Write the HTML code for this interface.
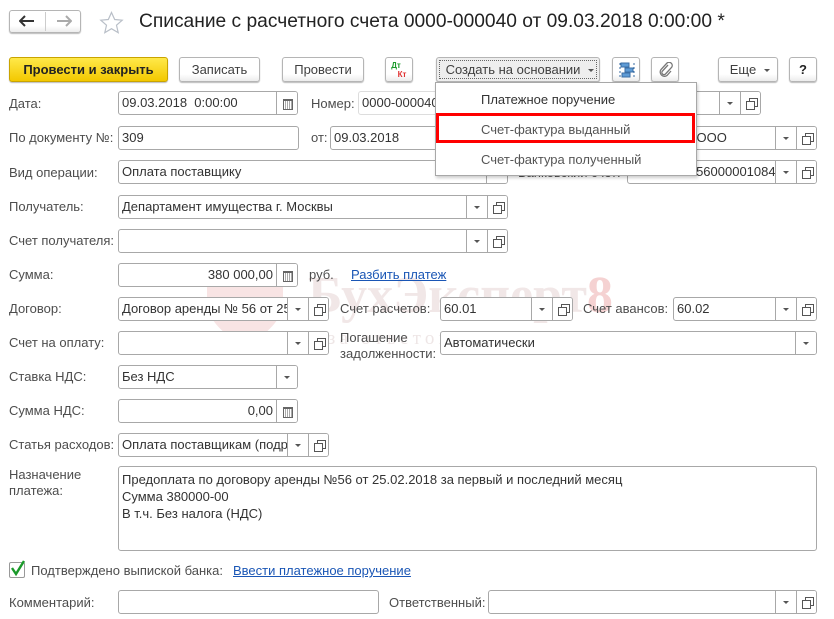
<!DOCTYPE html>
<html><head><meta charset="utf-8"><style>
*{box-sizing:border-box;margin:0;padding:0}
body{width:834px;height:619px;background:#fff;position:relative;overflow:hidden;font-family:"Liberation Sans",Arial,sans-serif;font-size:13px;color:#4d4d4d}
.a{position:absolute}
.lb{position:absolute;line-height:16px;white-space:nowrap}
.f{position:absolute;height:24px;border:1px solid #a8a8a8;border-radius:3px;background:#fff;color:#333;line-height:22px;padding-left:3px;white-space:nowrap;overflow:hidden}
.b{position:absolute;top:0;bottom:0;width:21px;border-left:1px solid #a8a8a8;background:#fff}
.dd::after{content:"";position:absolute;left:7px;top:10px;border-left:3px solid transparent;border-right:3px solid transparent;border-top:3px solid #555}
.op::before{content:"";position:absolute;left:8px;top:6px;width:7px;height:7px;border:1px solid #555}
.op::after{content:"";position:absolute;left:5px;top:9px;width:7px;height:7px;border:1px solid #555;background:#fff}
.cal::after{content:"";position:absolute;left:6px;top:7px;width:8px;height:8px;border:1px solid #666;border-top-width:2px;background:repeating-linear-gradient(90deg,#fff 0 1px,#aaa 1px 2px)}
.btn{position:absolute;height:25px;border:1px solid #b5b5b5;border-radius:3px;background:linear-gradient(#fff 70%,#ececec);box-shadow:0 1px 1px #bbb;text-align:center;line-height:23px;color:#404040;white-space:nowrap}
.mi{position:absolute;left:45px;line-height:16px;color:#333}
</style></head><body>
<div class="btn" style="left:9px;top:10px;width:72px;height:23px"></div>
<div class="a" style="left:45px;top:12px;width:1px;height:19px;background:#ccc"></div>
<svg class="a" style="left:19px;top:15px" width="16" height="12"><path d="M1 6h14M6 1L1 6l5 5" fill="none" stroke="#333" stroke-width="2"/></svg>
<svg class="a" style="left:56px;top:15px" width="16" height="12"><path d="M1 6h14M10 1l5 5-5 5" fill="none" stroke="#aaa" stroke-width="2"/></svg>
<svg class="a" style="left:99px;top:11px" width="25" height="24" viewBox="0 0 25 24"><path d="M12.5 1.5l3.2 7 7.5.7-5.7 5 1.7 7.4-6.7-3.9-6.7 3.9 1.7-7.4-5.7-5 7.5-.7z" fill="none" stroke="#b9bfc8" stroke-width="1.2"/></svg>
<div class="a" style="left:139px;top:10px;font-size:19.2px;color:#222;line-height:24px;white-space:nowrap">Списание с расчетного счета 0000-000040 от 09.03.2018 0:00:00 *</div>
<div class="btn" style="left:9px;top:57px;width:159px;background:linear-gradient(#ffe94a,#f3c800);border-color:#c9a400;color:#222;font-weight:bold">Провести и закрыть</div>
<div class="btn" style="left:179px;top:57px;width:81px">Записать</div>
<div class="btn" style="left:282px;top:57px;width:82px">Провести</div>
<div class="btn" style="left:385px;top:57px;width:28px;font-size:8px;line-height:9px;padding-top:3px;font-weight:bold"><span style="color:#1a9a2a;margin-right:6px">Дт</span><br><span style="color:#e03030;margin-left:6px">Кт</span></div>
<div class="btn" style="left:436px;top:57px;width:164px;background:#eee;padding-right:10px">Создать на основании<span style="position:absolute;right:5px;top:11px;border-left:3px solid transparent;border-right:3px solid transparent;border-top:3px solid #555"></span></div>
<div class="a" style="left:439px;top:60px;width:158px;height:19px;border:1px dotted #666"></div>
<div class="btn" style="left:612px;top:57px;width:28px"><svg class="a" style="left:6px;top:4px" width="16" height="16"><rect x="2" y="1" width="8" height="4" fill="#5d9bd5" stroke="#3a6ea5"/><rect x="6" y="6" width="8" height="4" fill="#5d9bd5" stroke="#3a6ea5"/><rect x="3" y="11" width="8" height="4" fill="#5d9bd5" stroke="#3a6ea5"/><path d="M1 1v14M15 1v14" stroke="#3a6ea5" stroke-dasharray="2 2"/></svg></div>
<div class="btn" style="left:651px;top:57px;width:28px"><svg class="a" style="left:6px;top:4px" width="16" height="16"><path d="M10 3L4.5 9a2 2 0 0 0 3 3l6-6.5a3.2 3.2 0 0 0-4.5-4.5L3 7.5a4.3 4.3 0 0 0 6 6L13 9" fill="none" stroke="#777" stroke-width="1.3"/></svg></div>
<div class="btn" style="left:718px;top:57px;width:60px;padding-right:10px">Еще<span style="position:absolute;right:7px;top:11px;border-left:3px solid transparent;border-right:3px solid transparent;border-top:3px solid #555"></span></div>
<div class="btn" style="left:789px;top:57px;width:28px;color:#222;font-weight:bold">?</div>

<svg class="a" style="left:205px;top:278px" width="80" height="70"><path d="M2 2h76v22c0 18-18 34-38 44C20 58 2 42 2 24z" fill="#f8e4e4"/><path d="M20 22q20 14 40 0M28 30q12 10 24 0" stroke="#fff" stroke-width="3" fill="none"/></svg>
<div class="a" style="left:308px;top:268px;font-family:'Liberation Serif',serif;font-weight:bold;font-size:52px;line-height:56px;color:#f1e7e7;white-space:nowrap">БухЭксперт<span style="color:#f5d2d2">8</span></div>
<div class="a" style="left:300px;top:328px;font-family:'Liberation Serif',serif;font-size:19px;letter-spacing:4.2px;color:#eee6e6;white-space:nowrap">База ответов по учёту в 1С</div>

<div class="lb" style="left:9px;top:96px">Дата:</div>
<div class="f" style="left:118px;top:91px;width:180px">09.03.2018&nbsp; 0:00:00<div class="b cal" style="right:0"></div></div>
<div class="lb" style="left:311px;top:96px">Номер:</div>
<div class="f" style="left:358px;top:91px;width:120px;border-color:#ddd">0000-000040</div>
<div class="f" style="left:680px;top:91px;width:81px"><div class="b dd" style="right:20px"></div><div class="b op" style="right:0;width:20px"></div></div>

<div class="lb" style="left:9px;top:130px">По документу №:</div>
<div class="f" style="left:118px;top:126px;width:181px">309</div>
<div class="lb" style="left:311px;top:130px">от:</div>
<div class="f" style="left:330px;top:126px;width:120px">09.03.2018</div>
<div class="f" style="left:680px;top:126px;width:137px">м ООО<div class="b dd" style="right:20px"></div><div class="b op" style="right:0;width:20px"></div></div>

<div class="lb" style="left:9px;top:165px">Вид операции:</div>
<div class="f" style="left:118px;top:160px;width:390px">Оплата поставщику<div class="b" style="right:0"></div></div>
<div class="lb" style="left:518px;top:165px">Банковский счет:</div>
<div class="f" style="left:627px;top:160px;width:190px">40702810556000001084<div class="b dd" style="right:20px"></div><div class="b op" style="right:0;width:20px"></div></div>

<div class="lb" style="left:9px;top:199px">Получатель:</div>
<div class="f" style="left:118px;top:195px;width:390px">Департамент имущества г. Москвы<div class="b dd" style="right:20px"></div><div class="b op" style="right:0;width:20px"></div></div>

<div class="lb" style="left:9px;top:233px">Счет получателя:</div>
<div class="f" style="left:118px;top:229px;width:390px"><div class="b dd" style="right:20px"></div><div class="b op" style="right:0;width:20px"></div></div>

<div class="lb" style="left:9px;top:267px">Сумма:</div>
<div class="f" style="left:118px;top:263px;width:180px;text-align:right;padding-right:24px">380 000,00<div class="b cal" style="right:0"></div></div>
<div class="lb" style="left:309px;top:267px">руб.</div>
<div class="lb" style="left:351px;top:267px;color:#1a56b5;text-decoration:underline">Разбить платеж</div>

<div class="lb" style="left:9px;top:301px">Договор:</div>
<div class="f" style="left:118px;top:297px;width:211px">Договор аренды № 56 от 25.02<div class="b dd" style="right:20px"></div><div class="b op" style="right:0;width:20px"></div></div>
<div class="lb" style="left:340px;top:301px">Счет расчетов:</div>
<div class="f" style="left:440px;top:297px;width:133px">60.01<div class="b dd" style="right:20px"></div><div class="b op" style="right:0;width:20px"></div></div>
<div class="lb" style="left:583px;top:301px">Счет авансов:</div>
<div class="f" style="left:673px;top:297px;width:144px">60.02<div class="b dd" style="right:20px"></div><div class="b op" style="right:0;width:20px"></div></div>

<div class="lb" style="left:9px;top:335px">Счет на оплату:</div>
<div class="f" style="left:118px;top:331px;width:211px"><div class="b dd" style="right:20px"></div><div class="b op" style="right:0;width:20px"></div></div>
<div class="lb" style="left:340px;top:330px">Погашение</div>
<div class="lb" style="left:340px;top:346px">задолженности:</div>
<div class="f" style="left:440px;top:331px;width:377px">Автоматически<div class="b dd" style="right:0"></div></div>

<div class="lb" style="left:9px;top:369px">Ставка НДС:</div>
<div class="f" style="left:118px;top:365px;width:180px">Без НДС<div class="b dd" style="right:0"></div></div>

<div class="lb" style="left:9px;top:403px">Сумма НДС:</div>
<div class="f" style="left:118px;top:399px;width:180px;text-align:right;padding-right:24px">0,00<div class="b cal" style="right:0"></div></div>

<div class="lb" style="left:9px;top:437px">Статья расходов:</div>
<div class="f" style="left:118px;top:433px;width:211px">Оплата поставщикам (подряд<div class="b dd" style="right:20px"></div><div class="b op" style="right:0;width:20px"></div></div>

<div class="lb" style="left:9px;top:467px">Назначение</div>
<div class="lb" style="left:9px;top:483px">платежа:</div>
<div class="f" style="left:118px;top:466px;width:699px;height:85px;line-height:17px;padding-top:4px">Предоплата по договору аренды №56 от 25.02.2018 за первый и последний месяц<br>Сумма 380000-00<br>В т.ч. Без налога (НДС)</div>

<div class="a" style="left:9px;top:562px;width:16px;height:16px;border:1px solid #999;border-radius:2px"></div>
<svg class="a" style="left:9px;top:559px" width="18" height="18"><path d="M3 9l4 6 8-13" fill="none" stroke="#1a9a2a" stroke-width="2.4"/></svg>
<div class="lb" style="left:31px;top:563px">Подтверждено выпиской банка:</div>
<div class="lb" style="left:233px;top:563px;color:#1a56b5;text-decoration:underline">Ввести платежное поручение</div>

<div class="lb" style="left:9px;top:595px">Комментарий:</div>
<div class="f" style="left:118px;top:590px;width:261px"></div>
<div class="lb" style="left:389px;top:595px">Ответственный:</div>
<div class="f" style="left:488px;top:590px;width:329px"><div class="b dd" style="right:20px"></div><div class="b op" style="right:0;width:20px"></div></div>

<div class="a" style="left:435px;top:82px;width:262px;height:94px;background:#fff;border:1px solid #a8a8a8;box-shadow:1px 2px 3px rgba(0,0,0,.2)">
<div class="mi" style="top:9px">Платежное поручение</div>
<div class="mi" style="top:39px;color:#555">Счет-фактура выданный</div>
<div class="mi" style="top:69px;color:#555">Счет-фактура полученный</div>
<div class="a" style="left:0;top:30px;width:259px;height:30px;border:3px solid #f00"></div>
</div>
</body></html>
